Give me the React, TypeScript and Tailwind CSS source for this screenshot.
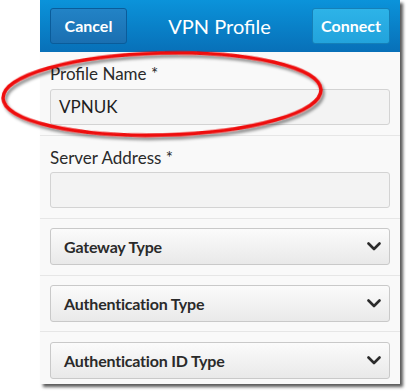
import React from "react";

const Chevron = () => (
  <svg width="14" height="9" viewBox="0 0 14 9" className="shrink-0">
    <path d="M1.5 1.5 L7 7 L12.5 1.5" fill="none" stroke="#2b2b2b" strokeWidth="2.6" strokeLinecap="round" strokeLinejoin="round" />
  </svg>
);

const Dropdown = ({ label }: { label: string }) => (
  <div className="h-[37px] rounded-[3px] border border-[#c9c9c9] bg-gradient-to-b from-[#fbfbfb] to-[#e9e9e9] flex items-center justify-between pl-[13px] pr-[8px]">
    <span className="text-[16px] font-bold text-[#2a2a2a] tracking-[-0.2px]">{label}</span>
    <Chevron />
  </div>
);

export default function App() {
  return (
    <div className="relative w-[408px] h-[392px] bg-white overflow-hidden" style={{ fontFamily: "Lato, 'Open Sans', sans-serif" }}>
      <div className="ml-[40px] w-[360px] bg-[#f9f9f9] shadow-[3px_3px_3px_rgba(0,0,0,0.65)]">
        <div className="h-[52px] bg-gradient-to-b from-[#0b93da] to-[#0870b8] flex items-center justify-between px-[10px]">
          <div className="w-[77px] h-[36px] rounded-[3px] border border-[#0a5c9a] bg-gradient-to-b from-[#2283c6] to-[#1a6fb1] flex items-center justify-center text-white font-bold text-[16px]">Cancel</div>
          <div className="text-white text-[20px]">VPN Profile</div>
          <div className="w-[78px] h-[36px] rounded-[3px] border border-[#1580b8] bg-gradient-to-b from-[#2db3e8] to-[#22a3dc] flex items-center justify-center text-white font-bold text-[16px]">Connect</div>
        </div>
        <div className="px-[10px] pt-[12px] pb-[10px] border-b border-[#e6e6e6]">
          <div className="h-[20px] leading-[20px] text-[17px] text-[#2a2a2a]">Profile Name *</div>
          <div className="mt-[5px] h-[36px] rounded-[3px] border border-[#d3d3d3] bg-[#f3f3f3] flex items-center pl-[8px] text-[17px] text-[#1e1e1e]">VPNUK</div>
        </div>
        <div className="px-[10px] pt-[12px] pb-[10px] border-b border-[#e6e6e6]">
          <div className="h-[20px] leading-[20px] text-[17px] text-[#2a2a2a]">Server Address *</div>
          <div className="mt-[4px] h-[36px] rounded-[3px] border border-[#d3d3d3] bg-[#f3f3f3]"></div>
        </div>
        <div className="px-[10px] pt-[9px] pb-[10px] border-b border-[#e6e6e6]">
          <Dropdown label="Gateway Type" />
        </div>
        <div className="px-[10px] pt-[9px] pb-[9px] border-b border-[#e6e6e6]">
          <Dropdown label="Authentication Type" />
        </div>
        <div className="px-[10px] pt-[10px] pb-[5px]">
          <Dropdown label="Authentication ID Type" />
        </div>
      </div>
      <svg className="absolute left-0 top-[46px]" width="340" height="100" viewBox="0 0 340 100">
        <defs>
          <filter id="sh" x="-10%" y="-20%" width="120%" height="150%">
            <feDropShadow dx="2" dy="3" stdDeviation="1.5" floodColor="#000" floodOpacity="0.45" />
          </filter>
        </defs>
        <ellipse cx="162" cy="48" rx="159" ry="41" fill="none" stroke="#ee0a0a" strokeWidth="3.5" filter="url(#sh)" transform="rotate(-1.5 162 48)" />
      </svg>
    </div>
  );
}
